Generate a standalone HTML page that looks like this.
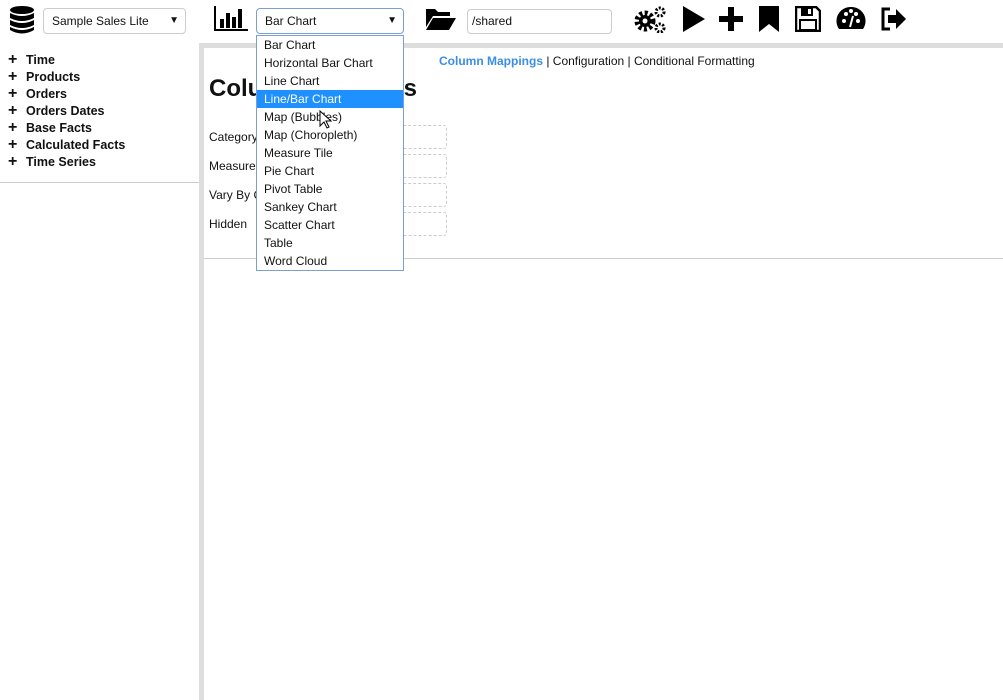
<!DOCTYPE html>
<html><head><style>
*{margin:0;padding:0;box-sizing:border-box}
body{width:1003px;height:700px;position:relative;background:#fff;font-family:"Liberation Sans",sans-serif;color:#111;overflow:hidden;font-size:12px}
.abs{position:absolute}
.sel{position:absolute;border:1px solid #ccc;border-radius:4px;height:26px;background:#fff;padding-left:8px;line-height:24px;font-size:12px}
.tree div{height:17px;font-weight:bold;font-size:12.5px;line-height:17px}
.tree span{display:inline-block;width:18px;font-size:16px;font-weight:900}
.dd{position:absolute;left:256px;top:35px;width:148px;height:236px;border:1px solid #7a9fd6;background:#fff}
.dd div{height:18px;line-height:18px;padding-left:7px;font-size:12px}
.lab{position:absolute;left:209px;font-size:12px}
.box{position:absolute;left:380px;width:67px;height:24px;border:1px dashed #ccc;border-radius:3px}
</style></head><body>
<svg class="abs" style="left:8px;top:5px" width="28" height="30" viewBox="0 0 28 30"><ellipse cx="14" cy="5" rx="12" ry="4"/><path d="M2 8q12 6 24 0v5q-12 6-24 0z M2 15q12 6 24 0v5q-12 6-24 0z M2 22q12 6 24 0v3q-12 7-24 0z"/></svg>
<div class="sel" style="left:43px;top:8px;width:143px">Sample Sales Lite<span class="abs" style="right:6px;top:0;font-size:10px">▼</span></div>
<svg class="abs" style="left:213px;top:6px" width="36" height="26" viewBox="0 0 36 26"><path d="M1 0v25h34v-2H3V0z" /><rect x="7" y="13" width="4" height="9"/><rect x="13" y="7" width="4" height="15"/><rect x="19" y="11" width="4" height="11"/><rect x="25" y="3" width="4" height="19"/></svg>
<div class="sel" style="left:256px;top:8px;width:148px;border-color:#7a9fd6">Bar Chart<span class="abs" style="right:6px;top:0;font-size:10px">▼</span></div>
<svg class="abs" style="left:426px;top:7px" width="30" height="24" viewBox="0 0 30 24"><path d="M0 2h9l3 3h12v4H7L0 20z M7 11h23l-7 12H0z"/></svg>
<div class="sel" style="left:467px;top:9px;width:145px;line-height:23px;height:25px;padding-left:4px">/shared</div>
<svg class="abs" style="left:634px;top:5px" width="34" height="28" viewBox="0 0 34 28"><circle cx="11" cy="16" r="8" fill="none" stroke="#000" stroke-width="5" stroke-dasharray="3 2.3"/><circle cx="11" cy="16" r="6"/><circle cx="11" cy="16" r="2.5" fill="#fff"/><circle cx="26" cy="7" r="4" fill="none" stroke="#000" stroke-width="3" stroke-dasharray="2 1.5"/><circle cx="26" cy="23" r="4" fill="none" stroke="#000" stroke-width="3" stroke-dasharray="2 1.5"/></svg>
<svg class="abs" style="left:682px;top:6px" width="24" height="26"><path d="M1 0L23 13L1 26z"/></svg>
<svg class="abs" style="left:719px;top:7px" width="24" height="24"><path d="M9 0h6v9h9v6h-9v9H9v-9H0V9h9z"/></svg>
<svg class="abs" style="left:758px;top:6px" width="22" height="26"><path d="M1 0h20v26l-10-8-10 8z"/></svg>
<svg class="abs" style="left:795px;top:6px" width="26" height="26" viewBox="0 0 26 26"><path d="M1 1h20l4 4v20H1z" fill="none" stroke="#000" stroke-width="2.5"/><rect x="6" y="2" width="12" height="8"/><rect x="13" y="3" width="3" height="5" fill="#fff"/><rect x="5" y="14" width="16" height="10" fill="none" stroke="#000" stroke-width="2"/></svg>
<svg class="abs" style="left:836px;top:6px" width="30" height="26" viewBox="0 0 30 26"><path d="M15 1A14 14 0 0 0 3 23h24A14 14 0 0 0 15 1z"/><circle cx="8" cy="15" r="2" fill="#fff"/><circle cx="10" cy="8" r="2" fill="#fff"/><circle cx="15" cy="5" r="2" fill="#fff"/><circle cx="20" cy="8" r="2" fill="#fff"/><circle cx="22" cy="15" r="2" fill="#fff"/><path d="M14 21l3-11" stroke="#fff" stroke-width="2"/></svg>
<svg class="abs" style="left:880px;top:7px" width="28" height="24" viewBox="0 0 28 24"><path d="M10 2H3v20h7" fill="none" stroke="#000" stroke-width="3"/><path d="M8 8h8V2l10 10-10 10v-6H8z"/></svg>
<div class="abs" style="left:199px;top:43px;width:804px;height:5px;background:#ddd"></div>
<div class="abs" style="left:199px;top:43px;width:5px;height:657px;background:#ddd"></div>
<div class="abs" style="left:0;top:182px;width:199px;height:1px;background:#ccc"></div>
<div class="abs" style="left:204px;top:258px;width:799px;height:1px;background:#ccc"></div>
<div class="tree abs" style="left:8px;top:51px">
<div><span>+</span>Time</div><div><span>+</span>Products</div><div><span>+</span>Orders</div><div><span>+</span>Orders Dates</div><div><span>+</span>Base Facts</div><div><span>+</span>Calculated Facts</div><div><span>+</span>Time Series</div>
</div>
<div class="abs" style="left:439px;top:54px;font-size:12px"><b style="color:#3a8ee6">Column Mappings</b> | Configuration | Conditional Formatting</div>
<div class="abs" style="left:209px;top:75px;font-size:24px;font-weight:bold">Column Mappings</div>
<div class="lab" style="top:130px">Category</div><div class="lab" style="top:159px">Measure</div><div class="lab" style="top:188px">Vary By Color</div><div class="lab" style="top:217px">Hidden</div>
<div class="box" style="top:125px"></div><div class="box" style="top:154px"></div><div class="box" style="top:183px"></div><div class="box" style="top:212px"></div>
<div class="dd">
<div>Bar Chart</div><div>Horizontal Bar Chart</div><div>Line Chart</div><div style="background:#1e90ff;color:#fff">Line/Bar Chart</div><div>Map (Bubbles)</div><div>Map (Choropleth)</div><div>Measure Tile</div><div>Pie Chart</div><div>Pivot Table</div><div>Sankey Chart</div><div>Scatter Chart</div><div>Table</div><div>Word Cloud</div>
</div>
<svg class="abs" style="left:319px;top:110px" width="14" height="20"><path d="M1 1v15l4-4 3 6 2-1-3-6h5z" fill="#fff" stroke="#000"/></svg>
</body></html>
